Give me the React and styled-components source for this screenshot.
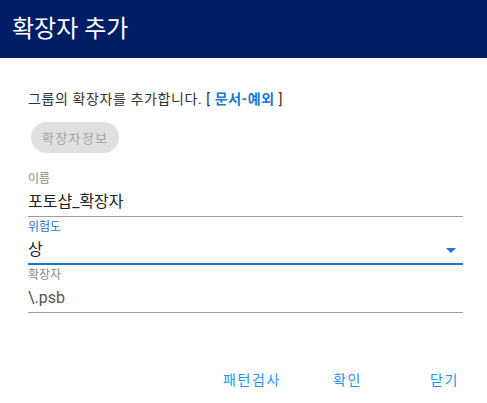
import React from "react"
import styled, { createGlobalStyle } from "styled-components"

const GlobalStyle = createGlobalStyle`
  body {
    margin: 0;
    background: #fff;
    font-family: Roboto, "Noto Sans CJK KR", sans-serif;
  }
`

const Dialog = styled.div`
  width: 487px;
  height: 403px;
  display: flex;
  flex-direction: column;
  background: #fff;
`

const Header = styled.div`
  height: 58px;
  background: #001e66;
  color: #fff;
  display: flex;
  align-items: center;
  padding: 0 12px 6px;
  box-sizing: border-box;
  font-size: 24px;
  font-weight: 400;
`

const Body = styled.div`
  padding: 30px 24px 0 28px;
  display: flex;
  flex-direction: column;
`

const Description = styled.p`
  margin: 0;
  font-size: 14px;
  line-height: 22px;
  color: #333;
  letter-spacing: 0.6px;
`

const DocLink = styled.span`
  color: #1976d2;
  font-weight: 700;
`

const Chip = styled.span`
  align-self: flex-start;
  margin: 12px 0 0 3px;
  height: 31px;
  padding: 0 11px;
  border-radius: 16px;
  background: #e0e0e0;
  color: #a6a6a6;
  font-size: 13px;
  letter-spacing: 1.3px;
  display: flex;
  align-items: center;
`

const Field = styled.div`
  display: flex;
  flex-direction: column;
  margin-top: ${p => p.$first ? "16px" : "0"};
  border-bottom: ${p => p.$focused ? "2px solid #1976d2" : "1px solid #9e9e9e"};
  height: ${p => p.$focused ? "46px" : "47px"};
`

const Label = styled.label`
  font-size: 12px;
  line-height: 16px;
  margin-top: 2px;
  color: ${p => p.$focused ? "#1976d2" : "#8a8a8a"};
`

const ValueRow = styled.div`
  display: flex;
  align-items: center;
  justify-content: space-between;
  font-size: 16px;
  line-height: 24px;
  margin-top: 3px;
  color: ${p => p.$muted ? "#555" : "#222"};
`

const Caret = styled.span`
  width: 0;
  height: 0;
  border-left: 5px solid transparent;
  border-right: 5px solid transparent;
  border-top: 5px solid #1976d2;
  margin-right: 7px;
`

const Actions = styled.div`
  margin-top: auto;
  height: 34px;
  display: flex;
  align-items: flex-start;
  justify-content: flex-end;
  padding-right: 31px;
`

const ActionButton = styled.button`
  border: none;
  background: none;
  padding: 0;
  font-family: inherit;
  font-size: 14px;
  letter-spacing: 1.6px;
  color: #2196f3;
  width: ${p => p.$w}px;
  text-align: left;
  white-space: nowrap;
  cursor: pointer;
`

export default function App() {
  return (
    <Dialog>
      <GlobalStyle />
      <Header>확장자 추가</Header>
      <Body>
        <Description>
          그룹의 확장자를 추가합니다. [ <DocLink>문서-예외</DocLink> ]
        </Description>
        <Chip>확장자정보</Chip>
        <Field $first>
          <Label>이름</Label>
          <ValueRow>포토샵_확장자</ValueRow>
        </Field>
        <Field $focused>
          <Label $focused>위험도</Label>
          <ValueRow>
            상<Caret />
          </ValueRow>
        </Field>
        <Field>
          <Label>확장자</Label>
          <ValueRow $muted>\.psb</ValueRow>
        </Field>
      </Body>
      <Actions>
        <ActionButton $w={110}>패턴검사</ActionButton>
        <ActionButton $w={97}>확인</ActionButton>
        <ActionButton $w={26}>닫기</ActionButton>
      </Actions>
    </Dialog>
  )
}
